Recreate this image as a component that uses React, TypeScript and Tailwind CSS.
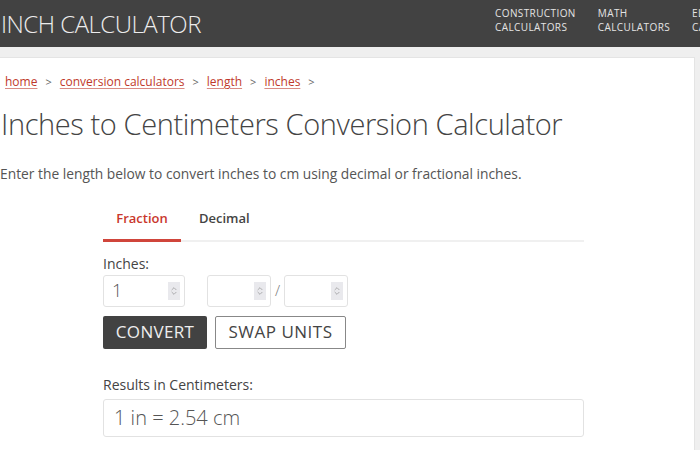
import { ChevronsUpDown } from "lucide-react";

const crumbs = ["home", "conversion calculators", "length", "inches"];

const navItems = [
  { top: "Construction", bottom: "Calculators" },
  { top: "Math", bottom: "Calculators" },
  { top: "Electrical", bottom: "Calculators" },
];

function NumberBox({ value, width }: { value?: string; width: string }) {
  return (
    <div
      className={`flex h-[32px] items-center justify-between rounded-[3px] border border-[#e2e2e2] bg-white pl-[8px] pr-[4px] ${width}`}
    >
      <span className="text-[18px] font-light text-[#555]">{value}</span>
      <span className="flex h-[18px] w-[12px] items-center justify-center bg-[#e9e9ed] text-[#888]">
        <ChevronsUpDown size={10} strokeWidth={1.5} />
      </span>
    </div>
  );
}

export default function App() {
  return (
    <div className="h-[450px] w-[700px] overflow-hidden bg-[#efefef] font-['Open_Sans',sans-serif]">
      <header className="flex h-[47px] overflow-hidden bg-[#424242]">
        <div className="flex w-[495px] shrink-0 items-center pl-[1px]">
          <span className="whitespace-nowrap text-[24px] font-light tracking-[-0.5px] text-[#ececec]">
            INCH CALCULATOR
          </span>
        </div>
        <nav className="flex shrink-0 gap-[22px] pt-[6px]">
          {navItems.map((item) => (
            <div
              key={item.top}
              className="whitespace-nowrap text-[10px] uppercase leading-[14px] tracking-[0.4px] text-[#e4e4e4]"
            >
              <div>{item.top}</div>
              <div>{item.bottom}</div>
            </div>
          ))}
        </nav>
      </header>

      <div className="pt-[10px]">
        <main className="h-[400px] w-[695px] border-t border-r border-[#e4e4e4] bg-white">
          <div className="flex items-center gap-[8px] pl-[5px] pt-[15px] text-[12px] text-[#c0392b]">
            {crumbs.map((c) => (
              <span key={c} className="flex items-center gap-[8px]">
                <span className="underline decoration-[#d98b83] underline-offset-[2px]">{c}</span>
                <span className="text-[11px] text-[#666]">&gt;</span>
              </span>
            ))}
          </div>

          <h1 className="mt-[11px] whitespace-nowrap pl-[1px] text-[29px] font-light tracking-[-0.4px] text-[#444]">
            Inches to Centimeters Conversion Calculator
          </h1>

          <p className="mt-[18px] whitespace-nowrap text-[13.8px] text-[#555]">
            Enter the length below to convert inches to cm using decimal or fractional inches.
          </p>

          <section className="ml-[103px] mt-[21px] w-[481px]">
            <div className="flex border-b-2 border-[#f0f0f0] text-[13px] font-semibold">
              <div className="-mb-[2px] w-[78px] border-b-[3px] border-[#d0453b] pb-[10px] pt-[4px] text-center text-[#c9372c]">
                Fraction
              </div>
              <div className="pb-[10px] pt-[4px] pl-[18px] text-[#444]">Decimal</div>
            </div>

            <div className="mt-[11px] text-[14px] text-[#444]">Inches:</div>
            <div className="mt-[1px] flex items-center">
              <NumberBox value="1" width="w-[82px]" />
              <div className="ml-[22px]">
                <NumberBox width="w-[64px]" />
              </div>
              <span className="mx-[4px] text-[15px] font-light text-[#777]">/</span>
              <NumberBox width="w-[64px]" />
            </div>

            <div className="mt-[9px] flex gap-[8px]">
              <button className="h-[33px] w-[104px] rounded-[2px] bg-[#424242] text-[17px] tracking-[0.3px] text-[#eee]">
                CONVERT
              </button>
              <button className="h-[33px] w-[131px] rounded-[2px] border border-[#888] bg-white text-[17px] tracking-[0.5px] text-[#444]">
                SWAP UNITS
              </button>
            </div>

            <div className="mt-[25px] text-[14px] text-[#444]">Results in Centimeters:</div>
            <div className="mt-[4px] flex h-[38px] items-center rounded-[3px] border border-[#e2e2e2] pl-[10px] text-[20px] font-light text-[#555]">
              1 in = 2.54 cm
            </div>
          </section>
        </main>
      </div>
    </div>
  );
}
